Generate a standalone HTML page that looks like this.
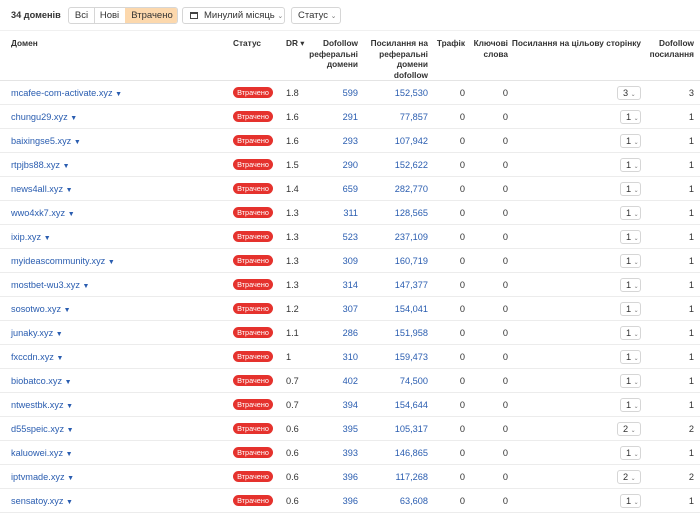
<!DOCTYPE html><html><head><meta charset="utf-8"><style>
*{margin:0;padding:0;box-sizing:border-box}
body{width:700px;height:512px;overflow:hidden;background:#fff;font-family:"Liberation Sans","DejaVu Sans",sans-serif;color:#333;position:relative}
.a{position:absolute;white-space:nowrap}
.t{font-size:8.3px;font-weight:bold;color:#333;line-height:10.5px}
.r{text-align:right}
.btn{position:absolute;top:7px;height:17px;border:1px solid #d6d6d6;border-radius:3px;font-size:9.5px;line-height:15px;color:#333;background:#fff}
.row{position:absolute;left:0;width:700px;height:24px;border-bottom:1px solid #ececec;font-size:9.2px}
.row div{position:absolute;top:6px;line-height:12px}
.dom{left:11px;color:#2a5db0}
.bd{left:233px;top:6px!important;width:40px;height:11px;background:#e5322d;color:#fff;border-radius:6px;font-size:7.3px;line-height:11px!important;text-align:center}
.lk{color:#2a5db0}
.sel{top:5px!important;height:14px;border:1px solid #d6d6d6;border-radius:3px;line-height:12px!important;padding-left:5px;font-size:9.2px}
</style></head><body>
<div class="a" style="left:11px;top:10px;font-size:9.2px;font-weight:bold;color:#333">34 доменів</div>
<div class="btn" style="left:68px;width:110px;overflow:hidden">
<span class="a" style="left:0;width:25px;text-align:center;top:0">Всі</span>
<span class="a" style="left:25px;width:30px;text-align:center;top:0;border-left:1px solid #d6d6d6">Нові</span>
<span class="a" style="left:56px;width:54px;text-align:center;top:-1px;height:17px;line-height:17px;background:#fcd8ad;">Втрачено</span>
</div>
<div class="btn" style="left:182px;width:103px"><span class="a" style="left:7px;top:4px;width:8px;height:7px;border:1px solid #444;border-top-width:2px"></span><span class="a" style="left:21px;top:0">Минулий місяць <span style="font-size:7px;color:#777">⌄</span></span></div>
<div class="btn" style="left:291px;width:50px"><span class="a" style="left:6px;top:0">Статус <span style="font-size:7px;color:#777">⌄</span></span></div>
<div style="position:absolute;left:0;top:30px;width:700px;height:51px;border-top:1px solid #f0f0f0;border-bottom:1px solid #e4e4e4"></div>
<div class="a t" style="left:11px;top:38px">Домен</div>
<div class="a t" style="left:233px;top:38px">Статус</div>
<div class="a t" style="left:286px;top:38px">DR ▾</div>
<div class="a t r" style="right:342px;top:38px">Dofollow<br>реферальні<br>домени</div>
<div class="a t r" style="right:272px;top:38px">Посилання на<br>реферальні<br>домени<br>dofollow</div>
<div class="a t r" style="right:235px;top:38px">Трафік</div>
<div class="a t r" style="right:192px;top:38px">Ключові<br>слова</div>
<div class="a t r" style="right:59px;top:38px">Посилання на цільову сторінку</div>
<div class="a t r" style="right:6px;top:38px">Dofollow<br>посилання</div>
<div id="rows"></div>
<script>
var d=[["mcafee-com-activate.xyz","1.8","599","152,530",3],["chungu29.xyz","1.6","291","77,857",1],["baixingse5.xyz","1.6","293","107,942",1],["rtpjbs88.xyz","1.5","290","152,622",1],["news4all.xyz","1.4","659","282,770",1],["wwo4xk7.xyz","1.3","311","128,565",1],["ixip.xyz","1.3","523","237,109",1],["myideascommunity.xyz","1.3","309","160,719",1],["mostbet-wu3.xyz","1.3","314","147,377",1],["sosotwo.xyz","1.2","307","154,041",1],["junaky.xyz","1.1","286","151,958",1],["fxccdn.xyz","1","310","159,473",1],["biobatco.xyz","0.7","402","74,500",1],["ntwestbk.xyz","0.7","394","154,644",1],["d55speic.xyz","0.6","395","105,317",2],["kaluowei.xyz","0.6","393","146,865",1],["iptvmade.xyz","0.6","396","117,268",2],["sensatoy.xyz","0.6","396","63,608",1]];
var h="";d.forEach(function(r,i){var w=r[4]>1?24:21;h+='<div class="row" style="top:'+(81+i*24)+'px"><div class="dom">'+r[0]+' <span style="font-size:7px">▼</span></div><div class="bd">Втрачено</div><div style="left:286px">'+r[1]+'</div><div class="lk" style="right:342px">'+r[2]+'</div><div class="lk" style="right:272px">'+r[3]+'</div><div style="right:235px">0</div><div style="right:192px">0</div><div class="sel" style="left:'+(641-w)+'px;width:'+w+'px">'+r[4]+' <span style="font-size:6px;color:#777">⌄</span></div><div style="right:6px">'+r[4]+'</div></div>'});
document.getElementById("rows").innerHTML=h;
</script>
</body></html>
